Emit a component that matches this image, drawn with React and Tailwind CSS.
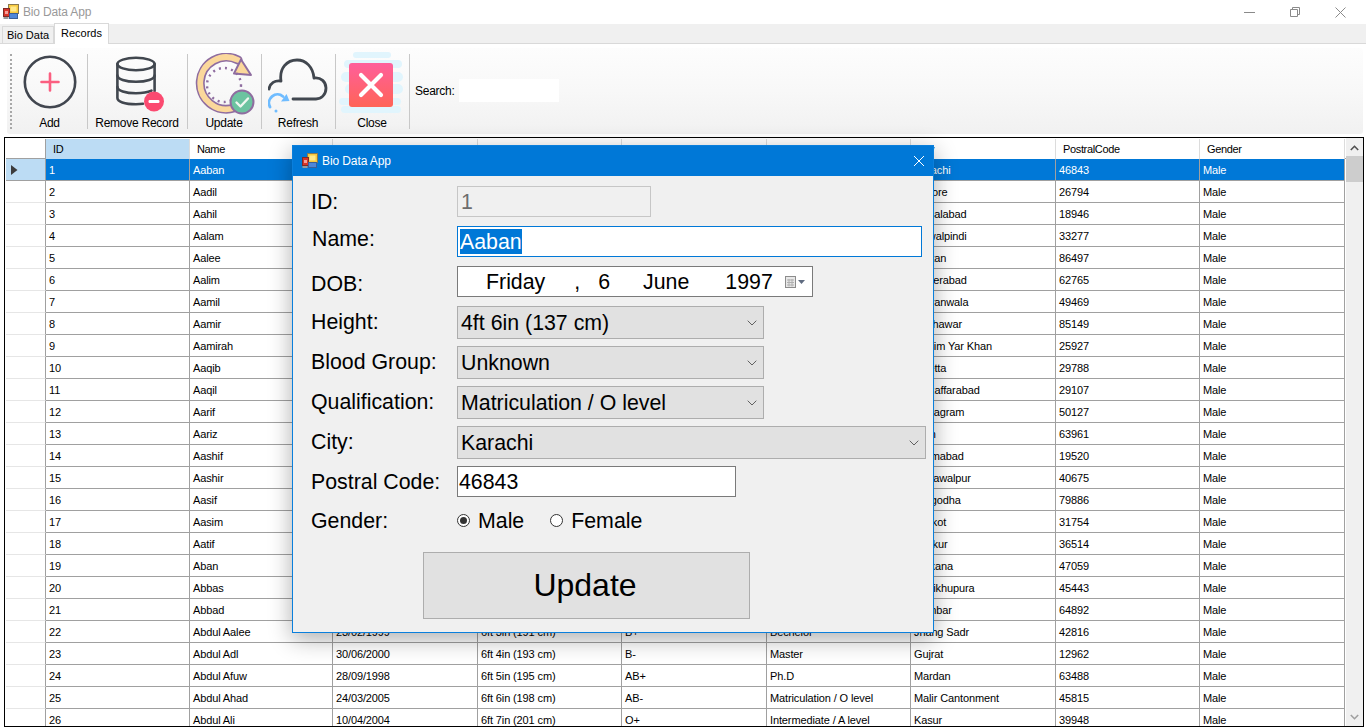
import React from "react";

const names = ["Aaban","Aadil","Aahil","Aalam","Aalee","Aalim","Aamil","Aamir","Aamirah","Aaqib","Aaqil","Aarif","Aariz","Aashif","Aashir","Aasif","Aasim","Aatif","Aban","Abbas","Abbad","Abdul Aalee","Abdul Adl","Abdul Afuw","Abdul Ahad","Abdul Ali"];
const dobs = ["06/06/1997","14/02/1998","21/09/1999","03/11/2000","17/05/2001","29/01/1996","08/07/2002","12/12/1997","25/03/2003","30/08/1995","11/04/1999","19/10/2000","02/06/2004","07/01/1998","16/09/2001","23/05/1997","05/12/2002","27/07/1996","09/03/2003","13/11/1999","20/08/2000","23/02/1999","30/06/2000","28/09/1998","24/03/2005","10/04/2004"];
const heights = ["4ft 6in (137 cm)","4ft 7in (140 cm)","4ft 8in (142 cm)","4ft 9in (145 cm)","4ft 10in (147 cm)","4ft 11in (150 cm)","5ft 0in (152 cm)","5ft 1in (155 cm)","5ft 2in (157 cm)","5ft 3in (160 cm)","5ft 4in (163 cm)","5ft 5in (165 cm)","5ft 6in (168 cm)","5ft 7in (170 cm)","5ft 8in (173 cm)","5ft 9in (175 cm)","5ft 10in (178 cm)","5ft 11in (180 cm)","6ft 0in (183 cm)","6ft 1in (185 cm)","6ft 2in (188 cm)","6ft 3in (191 cm)","6ft 4in (193 cm)","6ft 5in (195 cm)","6ft 6in (198 cm)","6ft 7in (201 cm)"];
const bloods = ["Unknown","A+","A-","B+","B-","AB+","AB-","O+","O-"];
const quals = ["Matriculation / O level","Intermediate / A level","Diploma","Bechelor","Master","Ph.D"];
const cities = ["Karachi","Lahore","Faisalabad","Rawalpindi","Multan","Hyderabad","Gujranwala","Peshawar","Rahim Yar Khan","Quetta","Muzaffarabad","Nagagram","Wah","Islamabad","Bahawalpur","Sargodha","Sialkot","Sukkur","Larkana","Sheikhupura","Kambar","Jhang Sadr","Gujrat","Mardan","Malir Cantonment","Kasur"];
const codes = ["46843","26794","18946","33277","86497","62765","49469","85149","25927","29788","29107","50127","63961","19520","40675","79886","31754","36514","47059","45443","64892","42816","12962","63488","45815","39948"];

const GRID = "grid grid-cols-[40px_144px_143px_145px_144px_145px_144px_145px_144px_145px]";
const headers = ["ID","Name","DOB","Height","BloodGroup","Qualification","City","PostralCode","Gender"];

function AppIcon({ className }) {
  return (
    <svg className={className} width="16" height="16" viewBox="0 0 16 16">
      <rect x="5.5" y="0.5" width="10" height="9" fill="#f7c93e" stroke="#8a7a50" />
      <rect x="7.5" y="2.5" width="6" height="5" fill="#ffe98a" />
      <rect x="0.5" y="4.5" width="6" height="8" fill="#d8352a" stroke="#7d2b26" />
      <rect x="2" y="7" width="3" height="3" fill="#f3a09a" />
      <rect x="6.5" y="9.5" width="8" height="5" fill="#4f86d8" stroke="#3a5f99" />
      <rect x="0.5" y="13" width="5" height="2" fill="#9a9a9a" />
    </svg>
  );
}

function AddIcon() {
  return (
    <svg width="56" height="56" viewBox="0 0 56 56">
      <circle cx="28" cy="28" r="25.2" fill="none" stroke="#41464f" strokeWidth="2.6" />
      <path d="M28 19.5v17M19.5 28h17" stroke="#fb5f80" strokeWidth="2.6" strokeLinecap="round" />
    </svg>
  );
}

function RemoveIcon() {
  return (
    <svg className="ml-[12px] mt-[2px]" width="56" height="58" viewBox="0 0 56 58">
      <g fill="none" stroke="#41474f" strokeWidth="2.6" strokeLinecap="round">
        <ellipse cx="21" cy="8" rx="18.6" ry="6.2" />
        <path d="M2.4 8v34c0 3.5 7 6.2 18.6 6.2 2.5 0 5-.1 7-.4" />
        <path d="M39.6 8v27" />
        <path d="M2.4 19.5c0 3.5 8 6.2 18.6 6.2s18.6-2.7 18.6-6.2" />
        <path d="M2.4 31c0 3.5 8 6.2 18.6 6.2 6.5 0 12-1 15.5-2.6" />
      </g>
      <circle cx="39" cy="45.5" r="10" fill="#fb4a70" />
      <rect x="33.5" y="44" width="11" height="3" rx="1.2" fill="#fff" />
    </svg>
  );
}

function UpdateIcon() {
  return (
    <svg className="-mt-[1px]" width="62" height="62" viewBox="0 0 62 62">
      <path d="M41 55 A26 26 0 1 1 45 7" fill="none" stroke="#8f6da0" strokeWidth="9" strokeLinecap="round" />
      <path d="M41 55 A26 26 0 1 1 45 7" fill="none" stroke="#fbd89b" strokeWidth="5.8" strokeLinecap="round" />
      <path d="M48 6.5 L58 22 L41 20.5 Z" fill="#fbd89b" stroke="#8f6da0" strokeWidth="2" strokeLinejoin="round" />
      <circle cx="31" cy="32" r="17" fill="none" stroke="#8f6da0" strokeWidth="2.4" strokeDasharray="2 4.2" />
      <circle cx="49" cy="49" r="11.5" fill="#6cc3a0" stroke="#8f6da0" strokeWidth="2" />
      <path d="M43.5 49.5l4 4 7.5-8" fill="none" stroke="#f0f7f0" strokeWidth="2.4" strokeLinecap="round" strokeLinejoin="round" />
    </svg>
  );
}

function RefreshIcon() {
  return (
    <svg width="60" height="60" viewBox="0 0 60 60">
      <path d="M1 35 C2 29 7 26 13 27 C11 14 19 6 29 6 C38 6 45 13 46 24 C53 23 58 28 58 34 C58 41 53 45 48 45 L25 45" fill="none" stroke="#41474f" strokeWidth="2.8" strokeLinecap="round" strokeLinejoin="round" />
      <path d="M2 53 A8.5 8.5 0 0 1 15 42.5" fill="none" stroke="#6fbcff" strokeWidth="2.8" strokeLinecap="round" />
      <path d="M13 47.5 L21.5 47 L18.5 40 Z" fill="#6fbcff" />
      <circle cx="8" cy="57" r="1.5" fill="#6fbcff" />
    </svg>
  );
}

function CloseIcon() {
  return (
    <svg className="-mt-[2px]" width="66" height="62" viewBox="0 0 66 62">
      <defs>
        <linearGradient id="redg" x1="0" y1="0" x2="0" y2="1">
          <stop offset="0" stopColor="#ff5f9b" />
          <stop offset="1" stopColor="#ff6457" />
        </linearGradient>
      </defs>
      <g fill="#e1f5fd">
        <rect x="14" y="0" width="38" height="6" rx="3" />
        <rect x="5" y="8" width="58" height="8" rx="4" />
        <rect x="2" y="20" width="62" height="10" rx="5" />
        <rect x="6" y="32" width="58" height="10" rx="5" />
        <rect x="0" y="46" width="62" height="7" rx="3.5" />
        <rect x="2" y="54" width="60" height="7" rx="3.5" />
      </g>
      <rect x="10" y="11" width="44" height="44" rx="3" fill="url(#redg)" />
      <path d="M22 23l20 20M42 23l-20 20" stroke="#fff" strokeWidth="4.2" strokeLinecap="round" />
    </svg>
  );
}

function ToolButton({ width, label, children }) {
  return (
    <div className={`${width} h-[75px] flex flex-col items-center border-r border-[#c8c8c8] pr-[1px]`}>
      <div className="h-[56px] shrink-0 flex items-start justify-center">{children}</div>
      <div className="mt-[6px] shrink-0 text-[12px] leading-[14px] tracking-[-0.25px] text-black whitespace-nowrap">{label}</div>
    </div>
  );
}

function Chevron() {
  return (
    <svg width="10" height="6" viewBox="0 0 10 6" className="shrink-0">
      <path d="M.7.7L5 5l4.3-4.3" fill="none" stroke="#606060" strokeWidth="1" />
    </svg>
  );
}

function Select({ width, value }) {
  return (
    <div className={`${width} h-[33px] bg-[#e1e1e1] border border-[#adadad] flex items-center justify-between pl-[3px] pr-[3px] text-[21.33px] text-black`}>
      <span className="whitespace-nowrap pt-[2px]">{value}</span>
      <span className="w-[17px] flex justify-center"><Chevron /></span>
    </div>
  );
}

function Label({ children, offset = "mt-[1px]", x = "ml-0" }) {
  return <div className={`${offset} ${x} h-[31px] flex items-center text-[21.33px] text-black whitespace-nowrap`}>{children}</div>;
}

function Radio({ checked }) {
  return (
    <span className="w-[13px] h-[13px] rounded-full border border-[#333] bg-white flex items-center justify-center shrink-0">
      {checked && <span className="w-[7px] h-[7px] rounded-full bg-[#333]" />}
    </span>
  );
}

function Dialog() {
  return (
    <div className="absolute left-[292px] top-[145px] w-[642px] h-[488px] bg-[#f0f0f0] border border-[#0a7fdc] shadow-[0_6px_22px_rgba(0,0,0,0.32)] font-['Liberation_Sans',sans-serif]">
      <div className="h-[30px] bg-[#0078d7] flex items-center pl-[9px] pr-[7px] text-white text-[12px]">
        <AppIcon className="mr-[4px]" />
        <span className="tracking-[-0.1px]">Bio Data App</span>
        <svg className="ml-auto mr-[1px]" width="12" height="12" viewBox="0 0 12 12">
          <path d="M1 1l10 10M11 1L1 11" stroke="#fff" strokeWidth="1" />
        </svg>
      </div>
      <div className="pt-[10px] pl-[18px] grid grid-cols-[146px_1fr] auto-rows-[40px]">
        <Label>ID:</Label>
        <div className="w-[194px] h-[31px] bg-[#f0f0f0] border border-[#c6c6c6] flex items-center pl-[3px] pt-[2px] text-[21.33px] text-[#6d6d6d]">1</div>

        <Label offset="-mt-[2px]" x="ml-[1px]">Name:</Label>
        <div className="w-[465px] h-[31px] bg-white border border-[#0078d7] flex items-center pl-[2px] text-[21.33px]">
          <span className="bg-[#0078d7] text-white h-[25px] leading-[27px]">Aaban</span>
        </div>

        <Label offset="mt-[3px]">DOB:</Label>
        <div className="w-[356px] h-[31px] bg-white border border-[#7a7a7a] flex items-center pl-[28px] pt-[2px] text-[21.33px] text-black">
          <span>Friday</span>
          <span className="ml-[29px]">,</span>
          <span className="ml-[18px]">6</span>
          <span className="ml-[33px]">June</span>
          <span className="ml-[36px]">1997</span>
          <svg className="ml-[11px] -mt-[2px]" width="22" height="14" viewBox="0 0 22 14">
            <rect x="1.5" y="1.5" width="10" height="11" fill="#e8e8e8" stroke="#8c8c8c" />
            <path d="M3 5h7M3 7.5h7M3 10h7M5 4v7.5M8 4v7.5" stroke="#b0b0b0" strokeWidth="1" />
            <path d="M14 5h7l-3.5 4z" fill="#5f6b80" />
          </svg>
        </div>

        <Label>Height:</Label>
        <Select width="w-[307px]" value="4ft 6in (137 cm)" />

        <Label>Blood Group:</Label>
        <Select width="w-[307px]" value="Unknown" />

        <Label>Qualification:</Label>
        <Select width="w-[307px]" value="Matriculation / O level" />

        <Label>City:</Label>
        <Select width="w-[469px]" value="Karachi" />

        <Label>Postral Code:</Label>
        <div className="w-[279px] h-[31px] bg-white border border-[#7a7a7a] flex items-center pl-[1px] pt-[2px] text-[21.33px] text-black">46843</div>

        <Label offset="mt-0">Gender:</Label>
        <div className="-mt-[1px] h-[31px] flex items-center text-[21.33px] text-black">
          <Radio checked />
          <span className="ml-[8px] pt-[2px]">Male</span>
          <span className="ml-[26px]"><Radio /></span>
          <span className="ml-[8px] pt-[2px]">Female</span>
        </div>
      </div>
      <div className="ml-[130px] mt-[6px] w-[327px] h-[67px] bg-[#e1e1e1] border border-[#adadad] flex items-center justify-center pr-[3px] pb-[2px] text-[32px] text-black">
        Update
      </div>
    </div>
  );
}

function Table() {
  return (
    <div className="ml-[4px] mt-[3px] w-[1360px] h-[590px] border border-black overflow-hidden flex bg-white">
      <div className="w-[1340px] ml-[1px] shrink-0 pt-[1px]">
        <div className={`${GRID} h-[20px] border-b border-[#a0a0a0] text-[11px] leading-[19px] text-black`}>
          <div className="border-r border-[#a0a0a0]" />
          {headers.map((h, i) => (
            <div key={h} className={`pl-[7px] pt-[1px] border-r border-[#dcdcdc] ${h === "City" ? "tracking-[-0.8px]" : "tracking-[-0.35px]"} ${i === 0 ? "bg-[#bcdcf4]" : "bg-white"}`}>{h}</div>
          ))}
        </div>
        {names.map((n, i) => {
          const sel = i === 0;
          const cells = [String(i + 1), n, dobs[i], heights[i], bloods[i % 9], quals[i % 6], cities[i], codes[i], "Male"];
          return (
            <div key={n} className={`${GRID} h-[22px] text-[11px] leading-[20px] tracking-[-0.12px]`}>
              <div className={`border-r border-b border-[#a0a0a0] flex items-center pl-[5px] ${sel ? "bg-[#bcdcf4]" : "bg-white border-b-[#e6e6e6]"}`}>
                {sel && (
                  <svg width="7" height="10" viewBox="0 0 7 10"><path d="M0 0l6.5 5L0 10z" fill="#3c3c3c" /></svg>
                )}
              </div>
              {cells.map((c, j) => (
                <div key={j} className={`pl-[3px] pt-[1px] border-r border-b border-[#a0a0a0] whitespace-nowrap overflow-hidden ${sel ? "bg-[#0078d7] text-white" : "bg-white text-black"}`}>{c}</div>
              ))}
            </div>
          );
        })}
      </div>
      <div className="flex-1 bg-[#f0f0f0] flex flex-col">
        <div className="h-[17px] mt-[1px] flex items-center justify-center bg-[#f0f0f0]">
          <svg width="9" height="6" viewBox="0 0 9 6"><path d="M.8 5L4.5 1.3 8.2 5" fill="none" stroke="#505050" strokeWidth="1.6" /></svg>
        </div>
        <div className="h-[26px] bg-[#cdcdcd]" />
        <div className="flex-1 flex items-end justify-center pb-[6px]">
          <svg width="9" height="6" viewBox="0 0 9 6"><path d="M.8 1L4.5 4.7 8.2 1" fill="none" stroke="#a0a0a0" strokeWidth="1.6" /></svg>
        </div>
      </div>
    </div>
  );
}

export default function App() {
  return (
    <div className="relative w-[1366px] h-[728px] overflow-hidden bg-white font-['Liberation_Sans',sans-serif]">
      <div className="h-[24px] flex items-center pl-[3px] bg-white">
        <AppIcon />
        <span className="ml-[4px] text-[12px] tracking-[-0.15px] text-[#999999]">Bio Data App</span>
        <div className="ml-auto flex items-center pr-[20px] gap-[35px]">
          <svg width="11" height="10" viewBox="0 0 11 10"><path d="M0 5.5h11" stroke="#8a8a8a" /></svg>
          <svg width="10" height="10" viewBox="0 0 10 10"><path d="M.5 2.5h7v7h-7zM2.5 2.5v-2h7v7h-2" fill="none" stroke="#8a8a8a" /></svg>
          <svg width="11" height="11" viewBox="0 0 11 11"><path d="M.5.5l10 10M10.5.5l-10 10" stroke="#8a8a8a" /></svg>
        </div>
      </div>

      <div className="h-[20px] bg-[#f0f0f0] border-b border-[#d9d9d9] flex items-end pl-[2px] text-[11px] text-black">
        <div className="w-[52px] h-[17px] border border-b-0 border-[#d9d9d9] flex items-center justify-center bg-[#f0f0f0]">Bio Data</div>
        <div className="w-[55px] h-[21px] -mb-[1px] border border-b-0 border-[#d9d9d9] bg-white flex items-start justify-center pt-[1px]">Records</div>
      </div>

      <div className="ml-[7px] mt-[4px] w-[1356px] h-[86px] rounded-[3px] bg-gradient-to-b from-[#fdfdfd] via-[#f8f8f8] to-[#f1f1f1] flex items-center">
        <div className="ml-[3px] w-[3px] h-[75px] border-l-2 border-dotted border-[#a8a8a8]" />
        <ToolButton width="w-[75px]" label="Add"><AddIcon /></ToolButton>
        <ToolButton width="w-[100px]" label="Remove Record"><RemoveIcon /></ToolButton>
        <ToolButton width="w-[74px]" label="Update"><UpdateIcon /></ToolButton>
        <ToolButton width="w-[74px]" label="Refresh"><RefreshIcon /></ToolButton>
        <ToolButton width="w-[74px]" label="Close"><CloseIcon /></ToolButton>
        <span className="ml-[5px] text-[12px] tracking-[-0.25px] text-black">Search:</span>
        <div className="ml-[4px] -mt-[2px] w-[100px] h-[23px] bg-white" />
      </div>

      <Table />
      <Dialog />
    </div>
  );
}
